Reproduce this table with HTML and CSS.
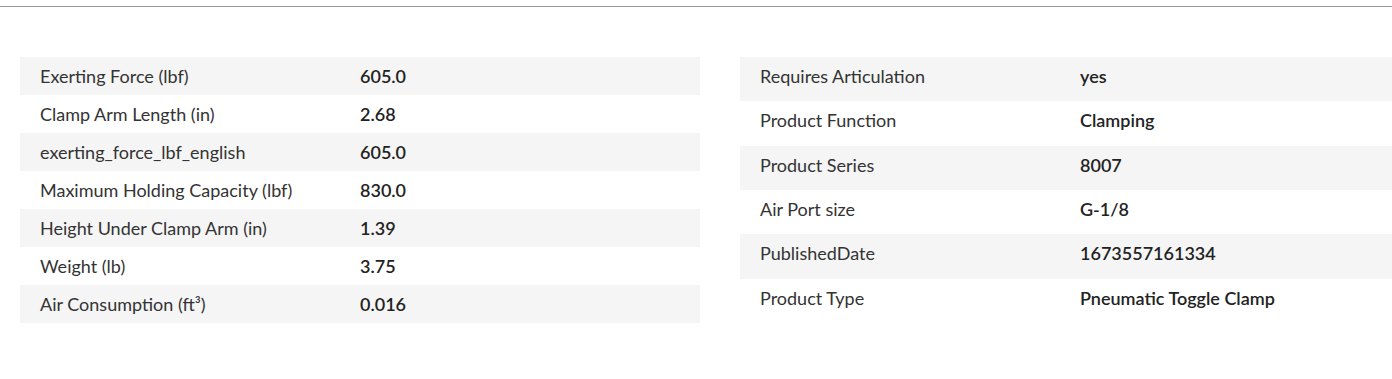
FILE: index.html
```html
<!DOCTYPE html>
<html>
<head>
<meta charset="utf-8">
<link rel="stylesheet" href="styles.css">
</head>
<body>
<div class="topline"></div>
<div class="specs">
  <table class="spec-table">
    <tr><td class="label">Exerting Force (lbf)</td><td class="value">605.0</td></tr>
    <tr><td class="label">Clamp Arm Length (in)</td><td class="value">2.68</td></tr>
    <tr><td class="label">exerting_force_lbf_english</td><td class="value">605.0</td></tr>
    <tr><td class="label">Maximum Holding Capacity (lbf)</td><td class="value">830.0</td></tr>
    <tr><td class="label">Height Under Clamp Arm (in)</td><td class="value">1.39</td></tr>
    <tr><td class="label">Weight (lb)</td><td class="value">3.75</td></tr>
    <tr><td class="label">Air Consumption (ft³)</td><td class="value">0.016</td></tr>
  </table>
  <table class="spec-table">
    <tr><td class="label">Requires Articulation</td><td class="value">yes</td></tr>
    <tr><td class="label">Product Function</td><td class="value">Clamping</td></tr>
    <tr><td class="label">Product Series</td><td class="value">8007</td></tr>
    <tr><td class="label">Air Port size</td><td class="value">G-1/8</td></tr>
    <tr><td class="label">PublishedDate</td><td class="value">1673557161334</td></tr>
    <tr><td class="label">Product Type</td><td class="value">Pneumatic Toggle Clamp</td></tr>
  </table>
</div>
</body>
</html>
```
FILE: styles.css
```css
html, body {
  margin: 0;
  padding: 0;
  background: #fff;
  overflow: hidden;
}
body {
  font-family: Lato, "Open Sans", sans-serif;
  color: #333;
  width: 1392px;
}
.topline {
  margin-top: 6px;
  height: 1px;
  background: #999;
}
.specs {
  display: grid;
  grid-template-columns: 680px 680px;
  column-gap: 40px;
  padding: 50px 0 0 20px;
  align-items: stretch;
}
.spec-table {
  width: 680px;
  height: 266px;
  border-collapse: collapse;
  table-layout: fixed;
}
.spec-table tr:nth-child(odd) {
  background: #f5f5f5;
}
.spec-table td {
  padding: 0;
  font-size: 18px;
  line-height: 38px;
  height: 38px;
  vertical-align: top;
  white-space: nowrap;
}
.label {
  width: 320px;
  padding-left: 20px !important;
  color: #333;
}
.value {
  font-weight: 600;
  color: #222;
}
```
